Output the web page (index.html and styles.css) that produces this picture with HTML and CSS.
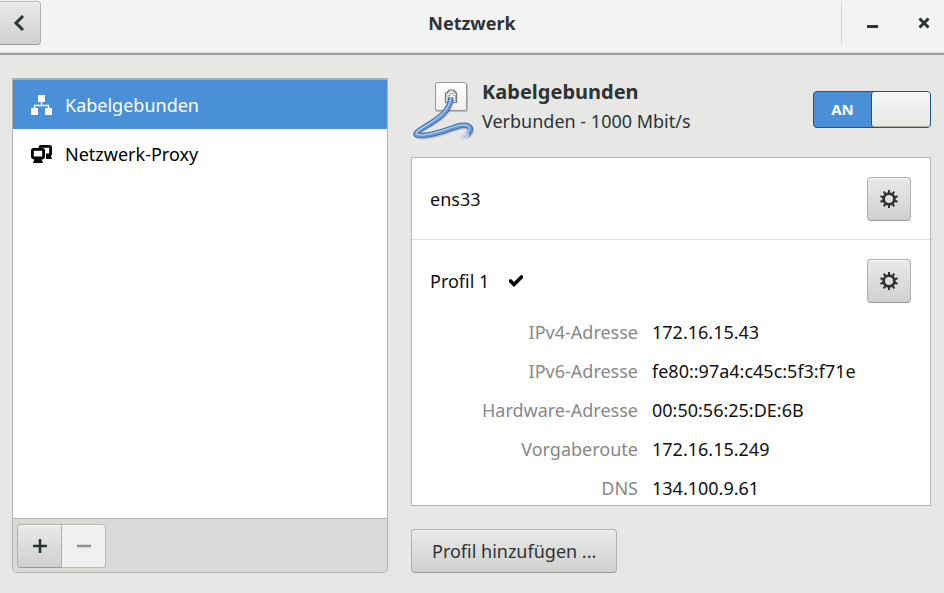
FILE: index.html
```html
<!DOCTYPE html>
<html lang="de">
<head>
<meta charset="utf-8">
<meta name="viewport" content="width=device-width, initial-scale=1">
<title>Netzwerk</title>
<link rel="stylesheet" href="styles.css">
</head>
<body>
<svg class="defs" aria-hidden="true">
  <symbol id="gear" viewBox="0 0 18 18">
    <circle cx="9" cy="9" r="5.400" fill="none" stroke="currentColor" stroke-width="2.800"/>
    <g stroke="currentColor" stroke-width="2">
      <path d="M9 0v3M9 15v3M0.400 6.200l3 1M14.600 10.800l3 1M0.400 11.800l3-1M14.600 7.200l3-1M3.700 1.700l1.800 2.500M12.500 13.800l1.800 2.500M14.300 1.700l-1.800 2.500M5.500 13.800l-1.800 2.500"/>
    </g>
  </symbol>
</svg>
<header class="titlebar">
  <button class="btn back" type="button" aria-label="Zurück">
    <svg width="12" height="18" viewBox="0 0 12 18"><path d="M10 2L3 9l7 7" fill="none" stroke="currentColor" stroke-width="3"/></svg>
  </button>
  <h1 class="title">Netzwerk</h1>
  <div class="window-controls">
    <button class="plain" type="button" aria-label="Minimieren">
      <svg width="12" height="12" viewBox="0 0 12 12"><path d="M1 9.500h11" stroke="currentColor" stroke-width="3"/></svg>
    </button>
    <button class="plain" type="button" aria-label="Schließen">
      <svg width="12" height="12" viewBox="0 0 12 12"><path d="M1.500 1.500l9 9M10.500 1.500l-9 9" stroke="currentColor" stroke-width="3"/></svg>
    </button>
  </div>
</header>
<main class="content">
  <nav class="sidebar">
    <ul class="devices">
      <li><a class="device selected" href="#wired" aria-current="page">
        <svg width="22" height="20" viewBox="0 0 22 20"><path d="M7 0h7v7H7zM0 13h7v7H0zM14 13h7v7h-7z" fill="currentColor"/><path d="M10.500 6v4.500M3.500 14v-3.500h14V14" fill="none" stroke="currentColor" stroke-width="1.400"/></svg>
        Kabelgebunden</a></li>
      <li><a class="device" href="#proxy">
        <svg width="22" height="20" viewBox="0 0 22 20"><g fill="none" stroke="currentColor" stroke-width="2.800"><rect x="1.400" y="5.400" width="11.200" height="8.600" rx="1.400"/><path d="M9 4V3.200Q9 2.400 10 2.400H18.600Q19.600 2.400 19.600 3.200V10Q19.600 11 18.600 11H15"/></g><path d="M4 14h6l2 5H2zM15 10h4l2 5h-6z" fill="currentColor"/></svg>
        Netzwerk-Proxy</a></li>
    </ul>
    <div class="toolbar">
      <button class="btn add" type="button" aria-label="Hinzufügen">
        <svg width="14" height="14" viewBox="0 0 14 14"><path d="M0 7h14M7 0v14" stroke="currentColor" stroke-width="2.600"/></svg>
      </button>
      <button class="btn remove" type="button" aria-label="Entfernen" disabled>
        <svg width="14" height="14" viewBox="0 0 14 14"><path d="M0 7h14" stroke="currentColor" stroke-width="2.400"/></svg>
      </button>
    </div>
  </nav>
  <section class="details" id="wired">
    <div class="summary">
      <svg class="cable" width="64" height="64" viewBox="0 0 64 64" aria-hidden="true">
        <defs><linearGradient id="plate" x1="0" y1="0" x2="0" y2="1"><stop offset="0" stop-color="#fff"/><stop offset="1" stop-color="#ededec"/></linearGradient>
        <linearGradient id="fade" gradientUnits="userSpaceOnUse" x1="0" y1="53" x2="0" y2="63"><stop offset="0" stop-color="#e7e7e5" stop-opacity="0"/><stop offset="1" stop-color="#e7e7e5"/></linearGradient></defs>
        <rect x="24" y="6" width="33" height="28" rx="2" fill="#bbbcb9"/>
        <rect x="24.500" y="4.500" width="31" height="28" rx="2" fill="url(#plate)" stroke="#959692"/>
        <path d="M34.500 24.500v-9.500h2v-1.500h1.500v-1.500h5v1.500h1.500v1.500h1v9.500z" fill="#e8e8e6" stroke="#777974" stroke-width="1.200"/>
        <path d="M37 22.500v-5h2v-2h3.500v2h2v5z" fill="#fff" stroke="#999" stroke-width=".8"/>
        <path d="M41 23C37 38 24 45 12 51C3 56 4 60 14 59C33 57 40 51 51 49C64 48 63 55 53 61" fill="none" stroke="#000" stroke-opacity=".14" stroke-width="5"/>
        <path d="M40 19C39 35 25 42 12 50C3 55 2 58 12 57.500C30 56 38 50 50 47.500C63 46 62 54 51 61" fill="none" stroke="#3f70b3" stroke-width="5.400"/>
        <path d="M40 19C39 35 25 42 12 50C3 55 2 58 12 57.500C30 56 38 50 50 47.500C63 46 62 54 51 61" fill="none" stroke="#6797d5" stroke-width="3.600"/>
        <path d="M40 19C38.500 34 25 41 11 50C3 55 3 57 12 57C29 55 38 49 50 47C61 46 61 52 51 59" fill="none" stroke="#b5d0f1" stroke-width="1.200"/>
        <path d="M46 53h12v11H46z" fill="url(#fade)"/>
        <path d="M49 61l7-6M53 62l5-6" stroke="#e7e7e5" stroke-width="1"/>
      </svg>
      <div class="names">
        <h2 class="name">Kabelgebunden</h2>
        <p class="status">Verbunden - 1000 Mbit/s</p>
      </div>
      <label class="switch">
        <input type="checkbox" role="switch" aria-label="Kabelgebunden" checked>
        <span class="on">AN</span><span class="knob"></span>
      </label>
    </div>
    <div class="panel">
      <div class="row interface">
        <span>ens33</span>
        <button class="btn options" type="button" aria-label="Optionen für ens33"><svg width="18" height="18"><use href="#gear"/></svg></button>
      </div>
      <div class="row">
        <span>Profil 1</span>
        <svg class="check" width="14" height="12" viewBox="0 0 14 12" role="img" aria-label="Aktiv"><path d="M1.500 6l3.500 3.500L12.500 2" fill="none" stroke="currentColor" stroke-width="3.600" stroke-linecap="round"/></svg>
        <button class="btn options" type="button" aria-label="Optionen für Profil 1"><svg width="18" height="18"><use href="#gear"/></svg></button>
      </div>
      <table class="facts">
        <tr><th scope="row">IPv4-Adresse</th><td>172.16.15.43</td></tr>
        <tr><th scope="row">IPv6-Adresse</th><td>fe80::97a4:c45c:5f3:f71e</td></tr>
        <tr><th scope="row">Hardware-Adresse</th><td>00:50:56:25:DE:6B</td></tr>
        <tr><th scope="row">Vorgaberoute</th><td>172.16.15.249</td></tr>
        <tr><th scope="row">DNS</th><td>134.100.9.61</td></tr>
      </table>
    </div>
    <button class="btn add-profile" type="button">Profil hinzufügen ...</button>
  </section>
</main>
</body>
</html>
```
FILE: styles.css
```css
* { box-sizing: border-box; }

body {
  display: flex;
  flex-direction: column;
  min-height: 100vh;
  margin: 0;
  background: #e7e7e5;
  color: #2e3436;
  font: 18px/24px "Noto Sans", sans-serif;
}

h1, h2, p, ul { margin: 0; padding: 0; }
button { font: inherit; color: inherit; }
svg { flex: none; }
.defs { position: absolute; width: 0; height: 0; }

.btn {
  display: flex;
  align-items: center;
  justify-content: center;
  height: 44px;
  padding: 0;
  border: 1px solid #b0b1ad;
  border-bottom-color: #999a95;
  border-radius: 4px;
  background: linear-gradient(#e9e9e8, #d0d0ce);
  box-shadow: inset 0 1px #f8f8f8;
}

.titlebar {
  display: grid;
  grid-template-columns: 1fr auto 1fr;
  align-items: start;
  height: 55px;
  padding-top: 1px;
  border-bottom: 2px solid #a0a09a;
  background: #f3f3f3;
  box-shadow: inset 0 -1px #dcdcda;
}
.back {
  width: 41px;
  padding-right: 2px;
  border-left: 0;
  border-radius: 0 4px 4px 0;
}
.title {
  font-size: 18px;
  line-height: 45px;
}
.window-controls {
  display: flex;
  justify-self: end;
  height: 44px;
  border-left: 1px solid #d5d5d3;
}
.plain {
  display: flex;
  align-items: center;
  justify-content: center;
  padding: 0;
  border: 0;
  background: none;
}
.plain:first-child { width: 60px; }
.plain:last-child { width: 42px; padding-left: 2px; }

.content {
  display: flex;
  flex: 1;
  gap: 23px;
  padding: 23px 13px 20px 12px;
}

.sidebar {
  display: flex;
  flex: 0 0 376px;
  flex-direction: column;
  overflow: hidden;
  border: 1px solid #b3b4b0;
  border-top: 2px solid #a9b0b4;
  border-radius: 0 0 5px 5px;
  background: #d9d9d7;
}
.devices {
  flex: 1;
  list-style: none;
  background: #fff;
}
.device {
  display: flex;
  align-items: center;
  gap: 12px;
  height: 49px;
  padding-left: 18px;
  color: #000;
  text-decoration: none;
}
.selected {
  background: #4a90d9;
  color: #fff;
}
.toolbar {
  display: flex;
  padding: 5px 4px 4px;
  border-top: 1px solid #b3b4b0;
}
.add {
  width: 45px;
  border-radius: 4px 0 0 4px;
}
.remove {
  width: 44px;
  border: 1px solid #b8b9b3;
  border-left-width: 0;
  border-radius: 0 4px 4px 0;
  background: #f0f0f0;
  color: #8d9091;
}

.details {
  display: flex;
  flex: 1;
  flex-direction: column;
  min-width: 0;
}
.summary {
  display: flex;
  height: 79px;
}
.names { margin-left: 7px; }
.name {
  font-size: 20px;
  line-height: 28px;
}
.status { line-height: 30px; }
.switch {
  position: relative;
  display: flex;
  width: 118px;
  height: 37px;
  margin: 13px 0 0 auto;
  border: 1px solid #1f5288;
  border-radius: 4px;
  background: #4a90d9;
}
.switch input {
  position: absolute;
  inset: 0;
  width: 100%;
  height: 100%;
  margin: 0;
  opacity: 0;
}
.on {
  flex: 1;
  color: #fff;
  font-size: 15px;
  font-weight: 700;
  line-height: 35px;
  text-align: center;
}
.knob {
  width: 59px;
  border-left: 1px solid #1f5288;
  border-radius: 3px;
  background: linear-gradient(#f6f6f6, #e6e6e5);
  box-shadow: inset 0 -1px #b0b1ad;
}

.panel {
  height: 349px;
  overflow: hidden;
  border: 1px solid #b6b7b3;
  background: #fff;
  color: #111;
}
.row {
  display: flex;
  align-items: center;
  height: 82px;
  padding: 0 19px 0 18px;
}
.interface { border-bottom: 1px solid #dfdfdd; }
.options {
  width: 44px;
  margin-left: auto;
  color: #2e3436;
}
.check { margin-left: 20px; color: #000; }

.facts {
  margin-top: -10px;
  border-collapse: collapse;
}
.facts th, .facts td {
  height: 39px;
  padding: 0;
}
.facts th {
  width: 226px;
  color: #888;
  font-weight: 400;
  text-align: right;
}
.facts td { padding-left: 14px; }

.add-profile {
  align-self: flex-start;
  margin-top: 23px;
  padding: 0 20px;
}
```
